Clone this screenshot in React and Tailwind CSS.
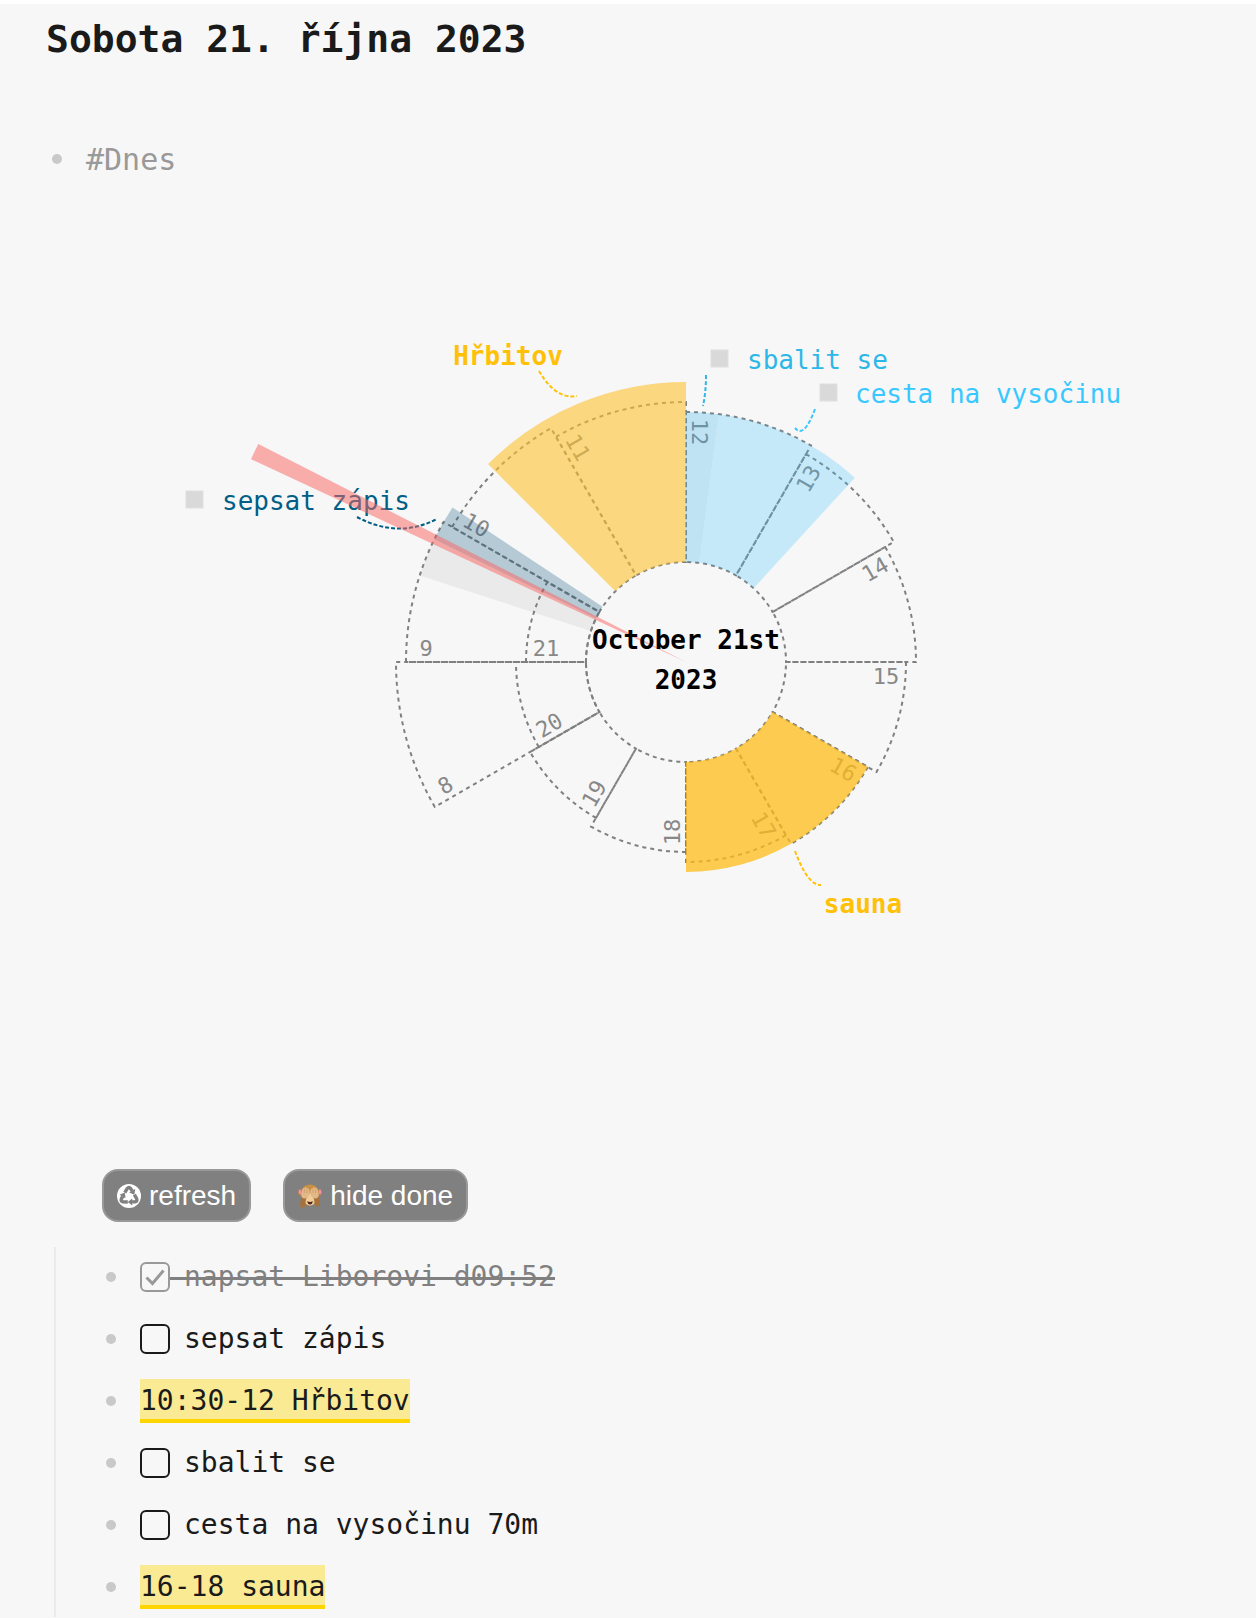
import React from "react";

const HOURS = Array.from({ length: 14 }, (_, i) => i + 8);

const rad = (deg) => (deg * Math.PI) / 180;
const pt = (r, deg) => `${(r * Math.sin(rad(deg))).toFixed(2)} ${(-r * Math.cos(rad(deg))).toFixed(2)}`;
const sector = (inner, outer, a0, a1) =>
  inner === 0
    ? `M0 0L${pt(outer, a0)}A${outer} ${outer} 0 0 1 ${pt(outer, a1)}Z`
    : `M${pt(outer, a0)}A${outer} ${outer} 0 0 1 ${pt(outer, a1)}L${pt(inner, a1)}A${inner} ${inner} 0 0 0 ${pt(inner, a0)}Z`;

const outerRadius = (h) => 370 - 10 * h;

function HourLabel({ hour }) {
  const a = (hour % 12) * 30;
  const r = outerRadius(hour) - 20;
  const x = r * Math.sin(rad(a)) + 14 * Math.cos(rad(a));
  const y = -r * Math.cos(rad(a)) + 14 * Math.sin(rad(a));
  let turn = (a + 90) % 180;
  if (turn > 90 || hour === 18) turn -= 180;
  return (
    <text transform={`translate(${x.toFixed(1)} ${y.toFixed(1)}) rotate(${turn})`} y="8" textAnchor="middle" className="fill-[#888888] text-[22px]">
      {hour}
    </text>
  );
}

function DayWheel() {
  return (
    <svg viewBox="-570 -470 1140 940" className="block w-full" role="img" aria-label="October 21st 2023">
      <g fill="none" stroke="#808080" strokeWidth="2" strokeDasharray="4 4">
        {HOURS.map((h) => (
          <path key={h} d={sector(100, outerRadius(h), (h % 12) * 30, (h % 12) * 30 + 30)} />
        ))}
      </g>
      {HOURS.map((h) => (
        <HourLabel key={h} hour={h} />
      ))}

      <path d={sector(100, 280, 288, 296)} fill="#808080" opacity="0.1" />
      <path d={sector(100, 280, 296, 303.5)} fill="#0e5681" opacity="0.28" />
      <path d={sector(100, 280, 315, 360)} fill="#fec231" opacity="0.6" />
      <path d={sector(100, 250, 0, 7.5)} fill="#2db0e8" opacity="0.28" />
      <path d={sector(100, 250, 7.5, 42.5)} fill="#38c0ff" opacity="0.26" />
      <path d={sector(100, 210, 120, 180)} fill="#fdbc18" opacity="0.75" />

      <g fill="none" strokeWidth="2" strokeDasharray="4 2">
        <path d="M-147 -291Q-130 -262 -109 -266" stroke="#ffc107" />
        <path d="M20 -287Q20 -270 17 -256" stroke="#2db7e8" />
        <path d="M129 -253Q118 -223 109 -234" stroke="#38c8ff" />
        <path d="M-329 -145Q-288 -123 -249 -143" stroke="#005f87" />
        <path d="M109 189Q122 224 135 223" stroke="#ffc107" />
      </g>

      <g fill="#d9d9d9" stroke="#e0e0e0">
        <rect x="-500" y="-171" width="17" height="17" />
        <rect x="25" y="-312" width="17" height="17" />
        <rect x="134" y="-278" width="17" height="17" />
      </g>
      <g className="text-[26px]">
        <text x="-464" y="-152" className="fill-[#005f87]">sepsat zápis</text>
        <text x="61" y="-293" className="fill-[#2db7e8]">sbalit se</text>
        <text x="169" y="-259" className="fill-[#38c8ff]">cesta na vysočinu</text>
        <g className="fill-[#ffc107] font-bold">
          <text x="-178" y="-297" textAnchor="middle">Hřbitov</text>
          <text x="177" y="251" textAnchor="middle">sauna</text>
        </g>
        <path d={sector(0, 480, 295, 297)} fill="#fb635f" opacity="0.5" />
        <g className="fill-black font-bold" textAnchor="middle">
          <text y="-13">October 21st</text>
          <text y="27">2023</text>
        </g>
      </g>
    </svg>
  );
}

function RecycleIcon() {
  const arm = (
    <>
      <path d="M7.800 8.600L10.200 4.600Q12 2.400 13.700 4.600L15.200 7" fill="none" stroke="#808080" strokeWidth="3.4" />
      <path d="M18.200 5L17.400 10.700L12.200 8.500Z" fill="#808080" />
    </>
  );
  return (
    <svg viewBox="0 0 24 24" className="size-6" aria-hidden="true">
      <circle cx="12" cy="12" r="12" fill="#fff" />
      <g>{arm}</g>
      <g transform="rotate(120 12 12.4)">{arm}</g>
      <g transform="rotate(240 12 12.4)">{arm}</g>
    </svg>
  );
}

function MonkeyIcon() {
  return (
    <svg viewBox="0 0 24 24" className="size-6" aria-hidden="true">
      <ellipse cx="2.6" cy="8.500" rx="2.400" ry="3.200" fill="#b98042" />
      <ellipse cx="21.400" cy="8.500" rx="2.400" ry="3.200" fill="#b98042" />
      <ellipse cx="2" cy="8" rx="1.300" ry="2.400" fill="#f58fac" />
      <ellipse cx="22" cy="8" rx="1.300" ry="2.400" fill="#f58fac" />
      <path d="M12 .4C17.500 .4 20.600 4 20.600 9.500C20.600 14 18 17 16.800 19C15.800 21 14 21.700 12 21.700S8.200 21 7.200 19C6 17 3.400 14 3.400 9.500C3.400 4 6.500 .4 12 .4Z" fill="#c98f42" />
      <path d="M12 9C14 11 16.600 14.500 16.600 17.600C16.600 20 15 21.400 12 21.400S7.400 20 7.400 17.600C7.400 14.500 10 11 12 9Z" fill="#f0cd98" />
      <path d="M1.800 24L3.200 13.500L8.600 13.500C7.400 16 7.200 20 6.600 24L5.300 21.500L4.400 24L3.400 21.500Z" fill="#a9703a" />
      <path d="M22.200 24L20.800 13.500L15.400 13.500C16.600 16 16.800 20 17.400 24L18.700 21.500L19.600 24L20.600 21.500Z" fill="#a9703a" />
      <path d="M3.300 11.500C3.200 7 4.500 3.600 7.500 3.600C10.200 3.600 11.900 6 11.700 9C11.500 12.500 9.400 14.400 7 14.500C5 14.600 3.500 13.500 3.300 11.500Z" fill="#e3b888" />
      <path d="M20.700 11.500C20.800 7 19.500 3.600 16.500 3.600C13.800 3.600 12.100 6 12.300 9C12.500 12.500 14.600 14.400 17 14.500C19 14.600 20.500 13.500 20.700 11.500Z" fill="#e3b888" />
      <path d="M6.300 5V9M9 4.600V9M15 4.600V9M17.700 5V9" stroke="#c79465" strokeWidth=".7" />
      <path d="M9.300 17.300Q12 18.600 14.700 17.300Q14.600 20.400 12 20.400Q9.400 20.400 9.300 17.300Z" fill="#4a241c" />
    </svg>
  );
}

function ActionButton({ icon, children }) {
  return (
    <button
      type="button"
      className="flex h-[53px] items-center gap-2 rounded-2xl border-2 border-[#999999] bg-[#808080] px-[13px] font-['Liberation_Sans',sans-serif] text-[28px] leading-8 text-white"
    >
      {icon}
      {children}
    </button>
  );
}

const Bullet = () => <span className="size-[10px] shrink-0 rounded-full bg-[#c9c9c9]" />;

function Task({ id, done, children }) {
  return (
    <span className={done ? "flex items-center gap-[14px] text-[#808080]" : "flex items-center gap-[14px]"}>
      <span className="relative flex size-[30px]">
        <input
          id={id}
          type="checkbox"
          defaultChecked={done}
          className="size-[30px] appearance-none rounded-md border-2 border-[#1a1a1a] checked:border-[#999999]"
        />
        {done && (
          <svg viewBox="0 0 30 30" className="pointer-events-none absolute inset-0" fill="none" stroke="#999999" strokeWidth="3" aria-hidden="true">
            <path d="M6.500 15.500L12.500 21.500L23.500 8.500" />
          </svg>
        )}
      </span>
      <label
        htmlFor={id}
        className={done ? "relative after:absolute after:-left-[14px] after:right-0 after:top-5 after:h-[3px] after:bg-[#808080]" : ""}
      >
        {children}
      </label>
    </span>
  );
}

const Event = ({ children }) => (
  <mark className="border-b-4 border-[#ffd500] bg-[#fbea94] pt-1 leading-9 text-[#1a1a1a]">{children}</mark>
);

const ENTRIES = [
  { id: "napsat", task: true, done: true, text: "napsat Liborovi d09:52" },
  { id: "sepsat", task: true, text: "sepsat zápis" },
  { id: "hrbitov", text: "10:30-12 Hřbitov" },
  { id: "sbalit", task: true, text: "sbalit se" },
  { id: "cesta", task: true, text: "cesta na vysočinu 70m" },
  { id: "sauna", text: "16-18 sauna" },
];

export default function App() {
  return (
    <main className="min-h-screen border-t-4 border-white bg-[#f7f7f7] font-['DejaVu_Sans_Mono',monospace] text-[#1a1a1a]">
      <h1 className="pl-[46px] pt-2 text-[38px] font-bold leading-[54px]">Sobota 21. října 2023</h1>
      <div className="mt-[73px] flex h-10 items-center gap-6 pl-[52px] text-[30px] text-[#999999]">
        <Bullet />
        <a href="#Dnes">#Dnes</a>
      </div>
      <div className="mt-[13px] pl-[116px]">
        <DayWheel />
      </div>
      <div className="mt-[37px] flex gap-8 pl-[102px]">
        <ActionButton icon={<RecycleIcon />}>refresh</ActionButton>
        <ActionButton icon={<MonkeyIcon />}>hide done</ActionButton>
      </div>
      <ul className="ml-[54px] mt-[25px] flex flex-col gap-[2px] border-l-2 border-[#ebebeb] pl-[50px] text-[28px] leading-10">
        {ENTRIES.map((e) => (
          <li key={e.id} className="flex h-[60px] items-center gap-6">
            <Bullet />
            {e.task ? (
              <Task id={e.id} done={e.done}>{e.text}</Task>
            ) : (
              <Event>{e.text}</Event>
            )}
          </li>
        ))}
      </ul>
    </main>
  );
}
